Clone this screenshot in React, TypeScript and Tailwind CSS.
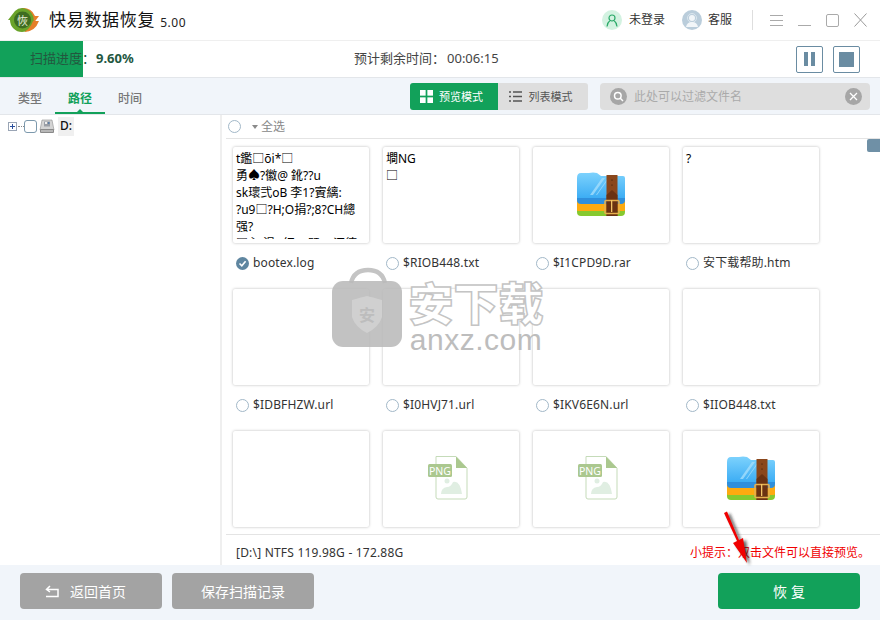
import React from "react";

const FONT = "font-['Noto_Sans','Noto_Sans_CJK_SC',sans-serif]";

function Check({ on = false }: { on?: boolean }) {
  if (on)
    return (
      <span className="flex h-[13px] w-[13px] shrink-0 items-center justify-center rounded-full bg-[#5f86a0]">
        <svg width="9" height="9" viewBox="0 0 9 9" fill="none" stroke="#fff" strokeWidth="1.6">
          <path d="M1.5 4.5 L3.8 6.8 L7.6 2.2" />
        </svg>
      </span>
    );
  return <span className="block h-[13px] w-[13px] shrink-0 rounded-full border-[1.5px] border-[#a2b8c8] bg-white" />;
}

function Rar({ id }: { id: string }) {
  return (
    <svg width="48" height="45" viewBox="0 0 48 45" className="-mt-[1px]">
      <defs>
        <linearGradient id={id} x1="0" y1="0" x2="0" y2="1">
          <stop offset="0" stopColor="#7dd2fd" />
          <stop offset="1" stopColor="#3dadf4" />
        </linearGradient>
      </defs>
      <path d="M0 34 V40 Q0 44 4 44 H44 Q48 44 48 40 V34Z" fill="#86c92f" />
      <rect x="0" y="28" width="48" height="11" rx="1" fill="#fdaa10" />
      <path d="M0 22 V28 Q0 32 4 32 H44 Q48 32 48 28 V22Z" fill="#2f8fdc" />
      <path d="M0 6 Q0 1 4 1 H12 Q16 0 20 1 L24 4 H46 Q48 4 48 6 V26 H0Z" fill={`url(#${id})`} />
      <path d="M13 23 L25 6 H28 L16 23Z M19 23 L31 6 H32 L20 23Z" fill="#a4ddfb" opacity=".8" />
      <rect x="29.500" y="3" width="11" height="41" fill="#8a471c" />
      <path d="M29.500 23 L35 18 L40.500 23 V44 H29.500Z" fill="#6a3212" />
      <rect x="28" y="28.500" width="14" height="13" rx="1" fill="none" stroke="#e7b04d" strokeWidth="1.6" />
      <rect x="34" y="28" width="1.300" height="12" fill="#f2c468" />
      <circle cx="35" cy="8" r=".6" fill="#2b1406" />
      <circle cx="35" cy="13" r=".6" fill="#2b1406" />
    </svg>
  );
}

function Png() {
  return (
    <svg width="40" height="44" viewBox="0 0 40 44" className="mb-[2px] mr-[6px]">
      <path d="M8 .5 H28 L39 12 V41 Q39 43 37 43 H10 Q8 43 8 41Z" fill="#fff" stroke="#c5dbb9" />
      <path d="M28 .5 L39 12 H28Z" fill="#abc88f" />
      <circle cx="19" cy="25" r="2.500" fill="#e0eee2" />
      <path d="M13 38 Q13 32 19 31 Q23 31 25 26 Q32 24 34 38Z" fill="#e0eee2" />
      <rect x="0" y="8" width="24" height="13" rx="1.500" fill="#abc88f" />
      <text x="12" y="18.500" textAnchor="middle" fontSize="10.500" fill="#fff" fontFamily="'Noto Sans',sans-serif">PNG</text>
    </svg>
  );
}

type Item = { name: string; on?: boolean; body?: React.ReactNode };

const doc = (lines: string[]) => (
  <div className="h-[92px] overflow-hidden px-[3px] pt-[3px] text-[12px] leading-[17px] text-black whitespace-nowrap">
    {lines.map((l, i) => (
      <div key={i}>{l}</div>
    ))}
  </div>
);
const center = (n: React.ReactNode) => <div className="flex h-full items-center justify-center">{n}</div>;

const items: Item[] = [
  { name: "bootex.log", on: true, body: doc(["t鑑□ōi*□", "勇♠?徽@    鈋??u", "sk瓌弐oB 李1?賨縭:", "?u9□?H;O捐?;8?CH總", "强?", "  □ 〕渴 /红 ^ 既 ^ 汇德"]) },
  { name: "$RIOB448.txt", body: doc(["墹NG", "□"]) },
  { name: "$I1CPD9D.rar", body: center(<Rar id="r1" />) },
  { name: "安下载帮助.htm", body: doc(["?"]) },
  { name: "$IDBFHZW.url" },
  { name: "$I0HVJ71.url" },
  { name: "$IKV6E6N.url" },
  { name: "$IIOB448.txt" },
  { name: "", body: null },
  { name: "", body: center(<Png />) },
  { name: "", body: center(<Png />) },
  { name: "", body: center(<Rar id="r2" />) },
];

function Card({ it }: { it: Item }) {
  return (
    <div className="h-[142px]">
      <div className="h-[96px] w-[136px] rounded-[2px] bg-white shadow-[0_0_3px_rgba(0,0,0,0.28)]">{it.body}</div>
      {it.name && (
        <div className="ml-[3px] mt-[13px] flex h-[14px] items-center gap-[4px] text-[12px] text-[#333]">
          <Check on={it.on} />
          <span className="tracking-[0.15px]">{it.name}</span>
        </div>
      )}
    </div>
  );
}

export default function App() {
  return (
    <div className={`${FONT} relative flex h-[620px] w-[880px] flex-col overflow-hidden bg-white`}>
      {/* title bar */}
      <header className="flex h-[41px] shrink-0 items-center border-b border-[#efefef] pl-[8px] pr-[13px]">
        <svg width="32" height="26" viewBox="0 0 32 26" className="-mt-[1px]">
          <path d="M14 1 A12 12 0 0 1 27 9 L31 9 L25 17 L19 9 L22 9 A8 8 0 0 0 14 5Z" fill="#e57f2a" />
          <path d="M14 25 A12 12 0 0 1 2 13 L0 13 L7 4 Q10 1 14 1 A12 12 0 0 1 25 17 Q22 25 14 25Z" fill="#6aa32a" />
          <circle cx="14.500" cy="13" r="8.500" fill="#3e6d22" />
          <path d="M25 14 L31 14 Q27 25 16 25 Q22 22 25 14Z" fill="#e57f2a" />
          <text x="14.500" y="17.500" textAnchor="middle" fontSize="11" fill="#e8efd9" fontFamily="'Noto Sans CJK SC',sans-serif">恢</text>
        </svg>
        <span className="ml-[9px] text-[17px] tracking-[0.7px] text-[#111]">快易数据恢复</span>
        <span className="ml-[5px] mt-[6px] text-[12px] tracking-[0.5px] text-[#222]">5.00</span>
        <div className="ml-auto flex items-center">
          <span className="flex h-[20px] w-[20px] items-center justify-center rounded-full bg-[#d3f2e1]">
            <svg width="12" height="13" viewBox="0 0 12 13" fill="none" stroke="#2aa968" strokeWidth="1.200">
              <circle cx="6" cy="4" r="3" />
              <path d="M1 12.500 Q1.500 8.500 3.800 6.800 M11 12.500 Q10.500 8.500 8.200 6.800" />
            </svg>
          </span>
          <span className="ml-[7px] text-[12px] text-[#333]">未登录</span>
          <span className="ml-[17px] flex h-[20px] w-[20px] items-center justify-center rounded-full bg-[#bacddb]">
            <svg width="16" height="14" viewBox="0 0 16 14">
              <circle cx="8" cy="5" r="4.500" fill="none" stroke="#dbe6ee" strokeWidth="1" />
              <circle cx="8" cy="5" r="3" fill="#f2f6f9" />
              <path d="M2 14 Q3 9 8 9 Q13 9 14 14Z" fill="#f2f6f9" />
            </svg>
          </span>
          <span className="ml-[6px] text-[12px] text-[#333]">客服</span>
          <span className="ml-[20px] h-[20px] w-px bg-[#dedede]" />
          <svg width="13" height="11" viewBox="0 0 13 11" stroke="#aaa" className="ml-[17px]">
            <path d="M0 .5 H13 M0 5.500 H13 M0 10.500 H13" />
          </svg>
          <svg width="13" height="12" viewBox="0 0 13 12" stroke="#aaa" className="ml-[15px] mt-[2px]">
            <path d="M0 10.500 H13" />
          </svg>
          <svg width="13" height="13" viewBox="0 0 13 13" fill="none" stroke="#aaa" className="ml-[15px]">
            <rect x=".5" y=".5" width="12" height="12" rx="1.500" />
          </svg>
          <svg width="13" height="14" viewBox="0 0 13 14" stroke="#999" className="ml-[15px] -mt-[1px]">
            <path d="M.5 .5 L12.500 13.500 M12.500 .5 L.5 13.500" />
          </svg>
        </div>
      </header>

      {/* progress */}
      <div className="relative flex h-[37px] shrink-0 items-center border-b border-[#e3e6ea] pr-[20px]">
        <div className="absolute left-0 top-0 h-[36px] w-[83px] bg-[#12a15a]" />
        <div className="relative ml-[30px] flex w-[324px] items-center text-[13px] text-[#23573f]">
          <span>{"扫描进度\uFF1A"}</span>
          <span className="ml-[1px] font-bold">9.60%</span>
        </div>
        <div className="relative flex text-[13px] text-[#444]">
          <span>{"预计剩余时间\uFF1A"}</span>
          <span className="ml-[2px]">00:06:15</span>
        </div>
        <div className="ml-auto flex gap-[10px]">
          <button className="flex h-[27px] w-[27px] items-center justify-center gap-[3px] rounded-[2px] border border-[#6a8ca2]">
            <span className="h-[14px] w-[4px] bg-[#6a8ca2]" />
            <span className="h-[14px] w-[4px] bg-[#6a8ca2]" />
          </button>
          <button className="flex h-[27px] w-[27px] items-center justify-center rounded-[2px] border border-[#6a8ca2]">
            <span className="h-[15px] w-[15px] bg-[#6a8ca2]" />
          </button>
        </div>
      </div>

      {/* tabs + filter */}
      <div className="flex h-[37px] shrink-0 border-b border-[#e3e6ea] bg-[#f1f5fa] pr-[10px]">
        <nav className="flex w-[410px] text-[12px] text-[#777]">
          <span className="w-[55px] pl-[18px] pt-[12px] font-medium">类型</span>
          <span className="relative w-[50px] border-b-2 border-[#12a15a] pt-[12px] text-center font-bold text-[#12a15a]">
            路径
            <span className="absolute bottom-0 left-1/2 -ml-[3px] h-0 w-0 border-x-[3px] border-b-[3px] border-x-transparent border-b-[#12a15a]" />
          </span>
          <span className="pl-[13px] pt-[12px] font-medium">时间</span>
        </nav>
        <div className="mt-[5px] flex h-[27px] text-[11px]">
          <span className="flex w-[88px] items-center justify-center gap-[6px] rounded-l-[3px] bg-[#12a15a] pr-[5px] text-white">
            <svg width="13" height="13" viewBox="0 0 12 12" fill="#fff">
              <rect width="5.200" height="5.200" />
              <rect x="6.800" width="5.200" height="5.200" />
              <rect y="6.800" width="5.200" height="5.200" />
              <rect x="6.800" y="6.800" width="5.200" height="5.200" />
            </svg>
            <span className="pt-[1px]">预览模式</span>
          </span>
          <span className="flex w-[90px] items-center justify-center gap-[7px] rounded-r-[3px] bg-[#dedede] pr-[5px] text-[#555]">
            <svg width="13" height="11" viewBox="0 0 13 11" stroke="#555" strokeWidth="1.500">
              <path d="M0 1 H2 M4 1 H13 M0 5.500 H2 M4 5.500 H13 M0 10 H2 M4 10 H13" />
            </svg>
            <span className="pt-[1px]">列表模式</span>
          </span>
        </div>
        <div className="ml-[12px] mt-[5px] flex h-[27px] flex-1 items-center rounded-[4px] bg-[#dedede] pl-[10px] pr-[8px]">
          <span className="flex h-[17px] w-[17px] items-center justify-center rounded-full bg-[#a6a6a6]">
            <svg width="11" height="11" viewBox="0 0 11 11" fill="none" stroke="#fff" strokeWidth="1.500">
              <circle cx="4.800" cy="4.800" r="3.300" />
              <path d="M7.300 7.300 L10 10" />
            </svg>
          </span>
          <span className="ml-[7px] pt-[1px] text-[12px] text-[#aaa]">此处可以过滤文件名</span>
          <span className="ml-auto flex h-[17px] w-[17px] items-center justify-center rounded-full bg-[#a6a6a6]">
            <svg width="9" height="9" viewBox="0 0 9 9" stroke="#fff" strokeWidth="1.300">
              <path d="M1 1 L8 8 M8 1 L1 8" />
            </svg>
          </span>
        </div>
      </div>

      {/* main */}
      <main className="flex min-h-0 flex-1">
        <aside className="w-[222px] shrink-0 border-r-2 border-[#efefef]">
          <div className="flex h-[22px] items-center pl-[8px]">
            <span className="flex h-[9px] w-[9px] items-center justify-center border border-[#9aa5b5] bg-white">
              <svg width="7" height="7" viewBox="0 0 7 7" stroke="#2b4f9c"><path d="M1 3.500 H6 M3.500 1 V6" /></svg>
            </span>
            <span className="ml-[1px] w-[6px] border-t border-dotted border-[#888]" />
            <span className="block h-[13px] w-[13px] rounded-[3px] border-[1.5px] border-[#7c99ad] bg-white" />
            <svg width="16" height="15" viewBox="0 0 16 15" className="ml-[2px]">
              <path d="M3 1 H13 L15 11 H1Z" fill="#d4d4d4" stroke="#8f8f8f" strokeWidth=".6" />
              <rect x="5" y="2.500" width="6" height="5" fill="#9a9ea5" />
              <rect x="6" y="3" width="2" height="2" fill="#f0f0f0" />
              <rect x="9" y="3" width="1.500" height="2" fill="#5a7ea8" />
              <rect x="1" y="10" width="14" height="4" rx="1" fill="#8a8a8a" />
              <rect x="2" y="11.500" width="12" height="1" fill="#e4e4e4" />
            </svg>
            <span className="ml-[3px] flex h-[19px] w-[16px] items-center bg-[#f0f0f0] pl-[2px] text-[12px] font-medium text-[#111]">D:</span>
          </div>
        </aside>

        <section className="flex min-w-0 flex-1 flex-col">
          <div className="ml-[4px] flex h-[24px] shrink-0 items-center border-b border-[#e4e4e4] pl-[2px] text-[12px] text-[#888]">
            <Check />
            <span className="ml-[11px] mr-[3px] h-0 w-0 border-x-[3.500px] border-t-[4px] border-x-transparent border-t-[#8a8a8a]" />
            全选
          </div>
          <div className="relative min-h-0 flex-1 overflow-hidden pl-[11px] pt-[8px]">
            <div className="absolute right-0 top-0 h-[13px] w-[13px] rounded-l-[2px] bg-[#6f90a6]" />
            <div className="grid grid-cols-[repeat(4,136px)] gap-x-[14px]">
              {items.map((it, i) => (
                <Card key={i} it={it} />
              ))}
            </div>
          </div>
          <div className="relative ml-[4px] flex h-[31px] shrink-0 items-start justify-between border-t border-[#e4e4e4] bg-white pl-[10px] pr-[10px] pt-[9px] text-[12px]">
            <span className="tracking-[0.2px] text-[#333]">[D:\] NTFS 119.98G - 172.88G</span>
            <span className="text-[#f00000]">{"小提示\uFF1A双击文件可以直接预览。"}</span>
          </div>
        </section>
      </main>

      {/* footer */}
      <footer className="flex h-[55px] shrink-0 items-start bg-[#f1f5fa] px-[20px] pt-[8px] text-[14px] text-white">
        <button className="flex h-[36px] w-[142px] items-center rounded-[4px] bg-[#a3a3a3] pl-[25px]">
          <svg width="14" height="13" viewBox="0 0 14 13" fill="none" stroke="#fff" strokeWidth="1.500">
            <path d="M1 11.500 H13 V4.500 H1.500 M5 1 L1.500 4.500 L5 7" />
          </svg>
          <span className="ml-[11px]">返回首页</span>
        </button>
        <button className="ml-[10px] h-[36px] w-[142px] rounded-[4px] bg-[#a3a3a3]">保存扫描记录</button>
        <button className="ml-auto h-[36px] w-[142px] rounded-[4px] bg-[#12a15a] pl-[4px] tracking-[4px]">恢复</button>
      </footer>

      {/* watermark */}
      <div className="pointer-events-none absolute left-[332px] top-[267px] flex select-none">
        <svg width="72" height="82" viewBox="0 0 72 82">
          <path d="M19 16 Q22 3 36 3 Q50 3 53 16" fill="none" stroke="#c4c4c4" strokeWidth="4.500" />
          <rect x="0" y="14" width="70" height="66" rx="11" fill="#b9b9b9" fillOpacity=".88" />
          <path d="M20 33 Q30 30 35 29 Q40 30 50 33 V50 Q47 60 35 66 Q23 60 20 50Z" fill="#d0d0d0" />
          <text x="35" y="54" textAnchor="middle" fontSize="16" fill="#bdbdbd" fontFamily="'Noto Sans CJK SC',sans-serif" fontWeight="700">安</text>
        </svg>
        <div className="-ml-[1px] mt-[12px] flex w-[146px] flex-col items-center">
          <span className="text-[45px] font-black leading-[50px] text-white [-webkit-text-stroke:1.5px_#c4c4c4]">安下载</span>
          <span className="-mt-[4px] text-[30px] leading-[30px] tracking-[0.5px] text-[#bdbdbd] font-['Liberation_Sans',sans-serif]">anxz.com</span>
        </div>
      </div>

      {/* red arrow annotation */}
      <svg width="50" height="72" viewBox="0 0 50 72" className="pointer-events-none absolute left-[715px] top-[505px]">
        <defs>
          <filter id="s" x="-50%" y="-50%" width="200%" height="200%">
            <feGaussianBlur stdDeviation="1.800" />
          </filter>
        </defs>
        <g transform="translate(3 2)" filter="url(#s)" fill="#222" opacity=".7">
          <path d="M9 8 L12 6.500 L24 35 L28 33 L32 58 L18 38 L22 36Z" />
        </g>
        <path d="M9 8 L12 6.500 L24 35 L28 33 L32 58 L18 38 L22 36Z" fill="#f00000" />
      </svg>
    </div>
  );
}
